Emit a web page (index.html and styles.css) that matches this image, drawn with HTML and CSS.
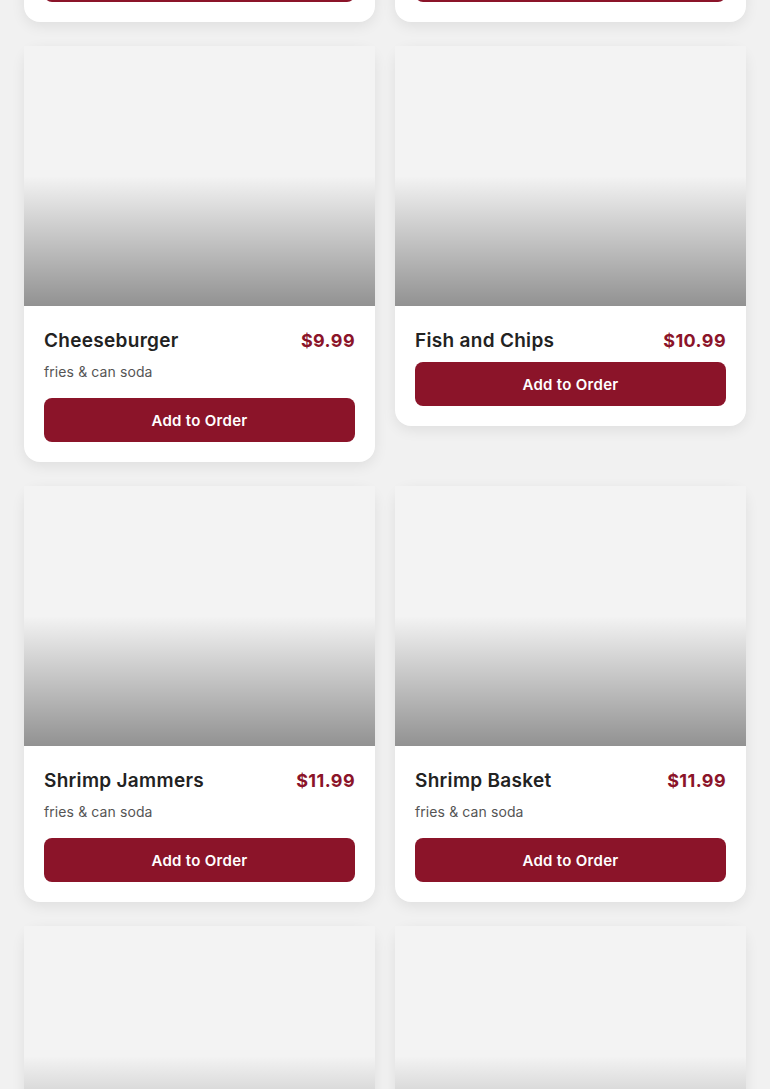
FILE: index.html
```html
<!DOCTYPE html>
<html lang="en">
<head>
<meta charset="utf-8">
<title>Menu</title>
<link rel="stylesheet" href="styles.css">
</head>
<body>
<main class="menu-grid">
  <article class="card">
    <div class="card-image"></div>
    <div class="card-body">
      <div class="card-head"><h3 class="card-title">Hot Dog</h3><span class="card-price">$8.99</span></div>
      <p class="card-desc">fries &amp; can soda</p>
      <button class="card-btn">Add to Order</button>
    </div>
  </article>
  <article class="card">
    <div class="card-image"></div>
    <div class="card-body">
      <div class="card-head"><h3 class="card-title">Chicken Tenders</h3><span class="card-price">$9.99</span></div>
      <p class="card-desc">fries &amp; can soda</p>
      <button class="card-btn">Add to Order</button>
    </div>
  </article>
  <article class="card">
    <div class="card-image"></div>
    <div class="card-body">
      <div class="card-head"><h3 class="card-title">Cheeseburger</h3><span class="card-price">$9.99</span></div>
      <p class="card-desc">fries &amp; can soda</p>
      <button class="card-btn">Add to Order</button>
    </div>
  </article>
  <article class="card">
    <div class="card-image"></div>
    <div class="card-body">
      <div class="card-head"><h3 class="card-title">Fish and Chips</h3><span class="card-price">$10.99</span></div>
      <button class="card-btn">Add to Order</button>
    </div>
  </article>
  <article class="card">
    <div class="card-image"></div>
    <div class="card-body">
      <div class="card-head"><h3 class="card-title">Shrimp Jammers</h3><span class="card-price">$11.99</span></div>
      <p class="card-desc">fries &amp; can soda</p>
      <button class="card-btn">Add to Order</button>
    </div>
  </article>
  <article class="card">
    <div class="card-image"></div>
    <div class="card-body">
      <div class="card-head"><h3 class="card-title">Shrimp Basket</h3><span class="card-price">$11.99</span></div>
      <p class="card-desc">fries &amp; can soda</p>
      <button class="card-btn">Add to Order</button>
    </div>
  </article>
  <article class="card">
    <div class="card-image"></div>
    <div class="card-body">
      <div class="card-head"><h3 class="card-title">Wings</h3><span class="card-price">$12.99</span></div>
      <p class="card-desc">fries &amp; can soda</p>
      <button class="card-btn">Add to Order</button>
    </div>
  </article>
  <article class="card">
    <div class="card-image"></div>
    <div class="card-body">
      <div class="card-head"><h3 class="card-title">Philly Steak</h3><span class="card-price">$12.99</span></div>
      <p class="card-desc">fries &amp; can soda</p>
      <button class="card-btn">Add to Order</button>
    </div>
  </article>
</main>
</body>
</html>
```
FILE: styles.css
```css
html, body {
  margin: 0;
  padding: 0;
  background: #f1f1f1;
  font-family: Inter, "Open Sans", "Liberation Sans", sans-serif;
  overflow: hidden;
}

.menu-grid {
  display: grid;
  grid-template-columns: 1fr 1fr;
  column-gap: 20px;
  row-gap: 24px;
  align-items: start;
  padding: 0 24px;
  margin-top: -394px;
}

.card {
  background: #ffffff;
  border-radius: 16px;
  box-shadow: 0 4px 14px rgba(0, 0, 0, 0.08);
}

.card-image {
  height: 260px;
  background-color: #f3f3f3;
  background-image: linear-gradient(to bottom, rgba(0, 0, 0, 0) 50%, rgba(0, 0, 0, 0.4) 100%);
}

.card-body {
  padding: 20px;
  display: flex;
  flex-direction: column;
}

.card-head {
  display: flex;
  justify-content: space-between;
  align-items: center;
  height: 28px;
  margin-bottom: 8px;
}

.card-title {
  margin: 0;
  font-size: 19px;
  font-weight: 600;
  color: #222222;
  letter-spacing: 0.3px;
}

.card-price {
  font-size: 18px;
  font-weight: 700;
  color: #8b1429;
  letter-spacing: 0.4px;
}

.card-desc {
  margin: 0 0 16px;
  font-size: 14px;
  line-height: 20px;
  color: #555555;
  letter-spacing: 0.1px;
}

.card-btn {
  height: 44px;
  border: none;
  border-radius: 8px;
  background: #8b1429;
  color: #ffffff;
  font-family: inherit;
  font-size: 15px;
  font-weight: 600;
  letter-spacing: 0.3px;
  cursor: pointer;
}
```
